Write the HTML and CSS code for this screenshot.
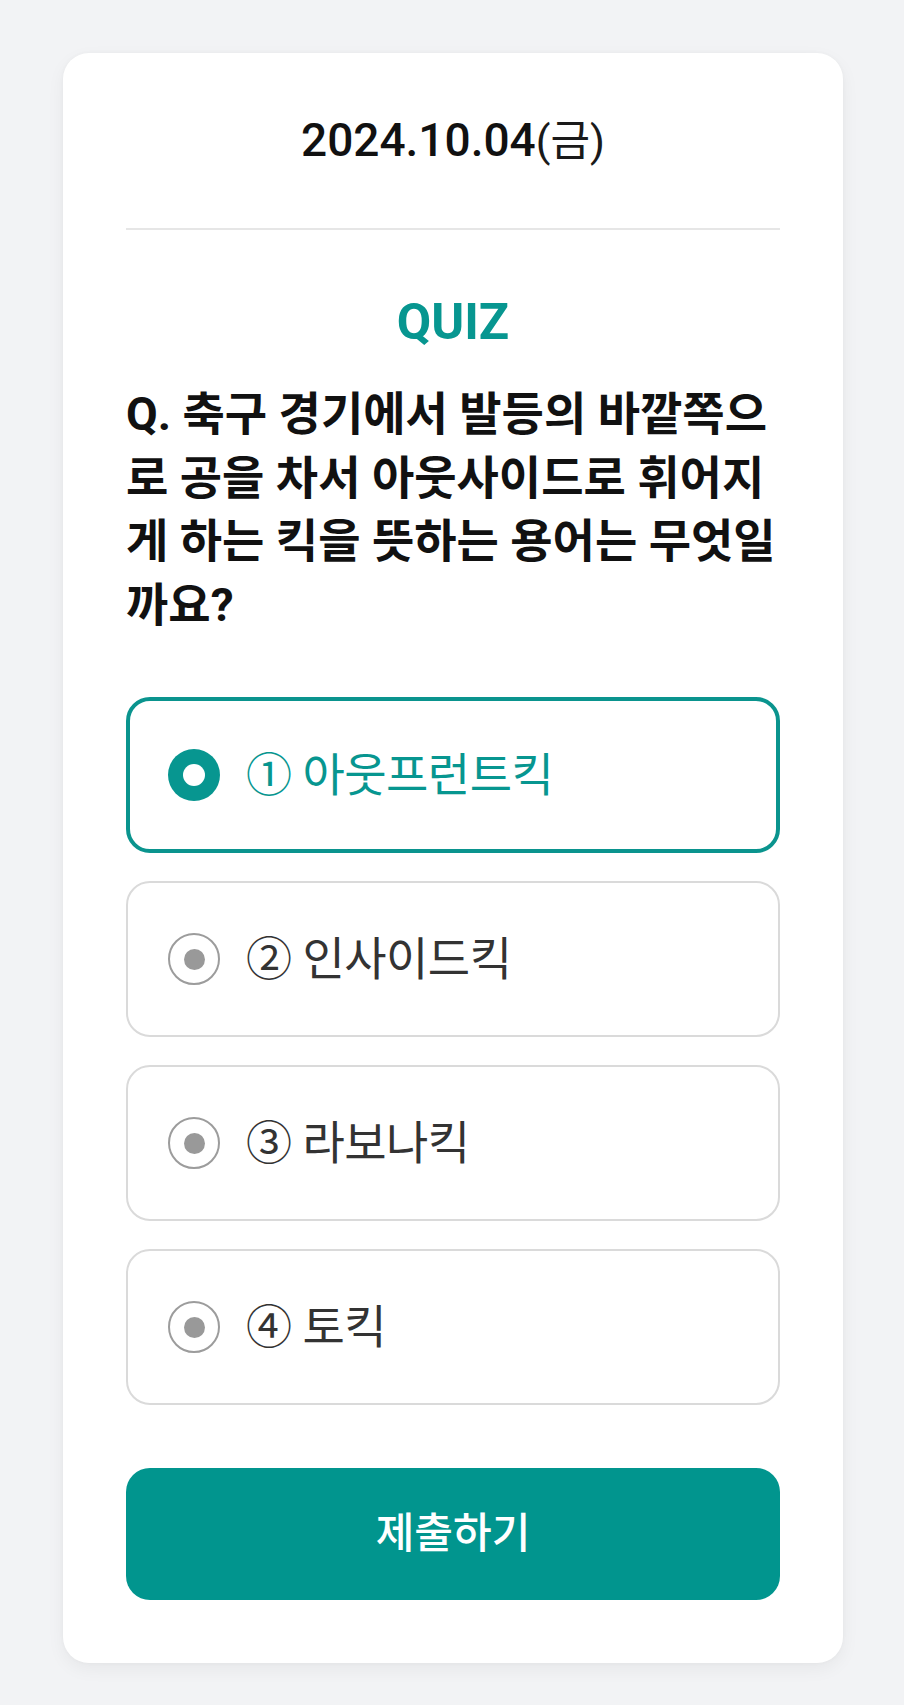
FILE: index.html
```html
<!DOCTYPE html>
<html lang="ko">
<head>
<meta charset="utf-8">
<title>QUIZ</title>
<link rel="stylesheet" href="styles.css">
</head>
<body>
  <main class="card">
    <div class="date">2024.10.04<span class="day">(금)</span></div>
    <hr class="divider">
    <h1 class="quiz-title">QUIZ</h1>
    <p class="question">Q. 축구 경기에서 발등의 바깥쪽으로 공을 차서 아웃사이드로 휘어지게 하는 킥을 뜻하는 용어는 무엇일까요?</p>
    <ul class="options">
      <li class="option selected"><span class="radio"></span><span class="label">① 아웃프런트킥</span></li>
      <li class="option"><span class="radio"></span><span class="label">② 인사이드킥</span></li>
      <li class="option"><span class="radio"></span><span class="label">③ 라보나킥</span></li>
      <li class="option"><span class="radio"></span><span class="label">④ 토킥</span></li>
    </ul>
    <button class="submit" type="button">제출하기</button>
  </main>
</body>
</html>
```
FILE: styles.css
```css
html, body {
  margin: 0;
  padding: 0;
}

body {
  background: #f2f3f5;
  padding: 53px 61px 42px 63px;
  font-family: Roboto, "Noto Sans CJK KR", sans-serif;
  color: #111;
}

.card {
  display: flex;
  flex-direction: column;
  background: #ffffff;
  border-radius: 26px;
  padding: 60px 63px 63px;
  box-shadow: 0 6px 18px rgba(0, 0, 0, 0.05), 0 0 4px rgba(0, 0, 0, 0.03);
}

.date {
  text-align: center;
  font-size: 46px;
  font-weight: 500;
  line-height: 54px;
  height: 54px;
  color: #111;
}

.day {
  font-size: 43px;
  font-weight: 400;
  color: #1a1a1a;
}

.divider {
  margin: 61px 0 0;
  border: 0;
  height: 2px;
  background: #e6e6e6;
}

.quiz-title {
  margin: 62px 0 0;
  text-align: center;
  font-size: 50px;
  line-height: 60px;
  font-weight: 700;
  color: #079690;
}

.question {
  margin: 31px 0 0;
  font-size: 46px;
  line-height: 63.5px;
  font-weight: 700;
  letter-spacing: 0;
  color: #111;
}

.options {
  list-style: none;
  margin: 60px 0 0;
  padding: 0;
  display: flex;
  flex-direction: column;
  gap: 28px;
}

.option {
  box-sizing: border-box;
  height: 156px;
  display: flex;
  align-items: center;
  border: 2px solid #dadada;
  border-radius: 24px;
  padding-left: 40px;
  color: #333;
}

.option.selected {
  border: 4px solid #0a948e;
  padding-left: 38px;
  color: #079690;
}

.radio {
  position: relative;
  box-sizing: border-box;
  flex: 0 0 auto;
  width: 52px;
  height: 52px;
  border-radius: 50%;
  border: 2px solid #9c9c9c;
  display: flex;
  align-items: center;
  justify-content: center;
}

.radio::after {
  content: "";
  width: 21px;
  height: 21px;
  border-radius: 50%;
  background: #999;
}

.option.selected .radio {
  border: 0;
  background: #079690;
}

.option.selected .radio::after {
  width: 22px;
  height: 22px;
  background: #ffffff;
}

.label {
  margin-left: 26px;
  font-size: 46px;
  line-height: 46px;
  letter-spacing: -0.5px;
  font-weight: 400;
}

.submit {
  margin-top: 63px;
  height: 132px;
  border: 0;
  border-radius: 24px;
  background: #01958e;
  color: #ffffff;
  font-family: Roboto, "Noto Sans CJK KR", sans-serif;
  font-size: 42px;
  line-height: 42px;
  font-weight: 500;
  letter-spacing: 0;
  padding: 0;
  cursor: pointer;
}
```
